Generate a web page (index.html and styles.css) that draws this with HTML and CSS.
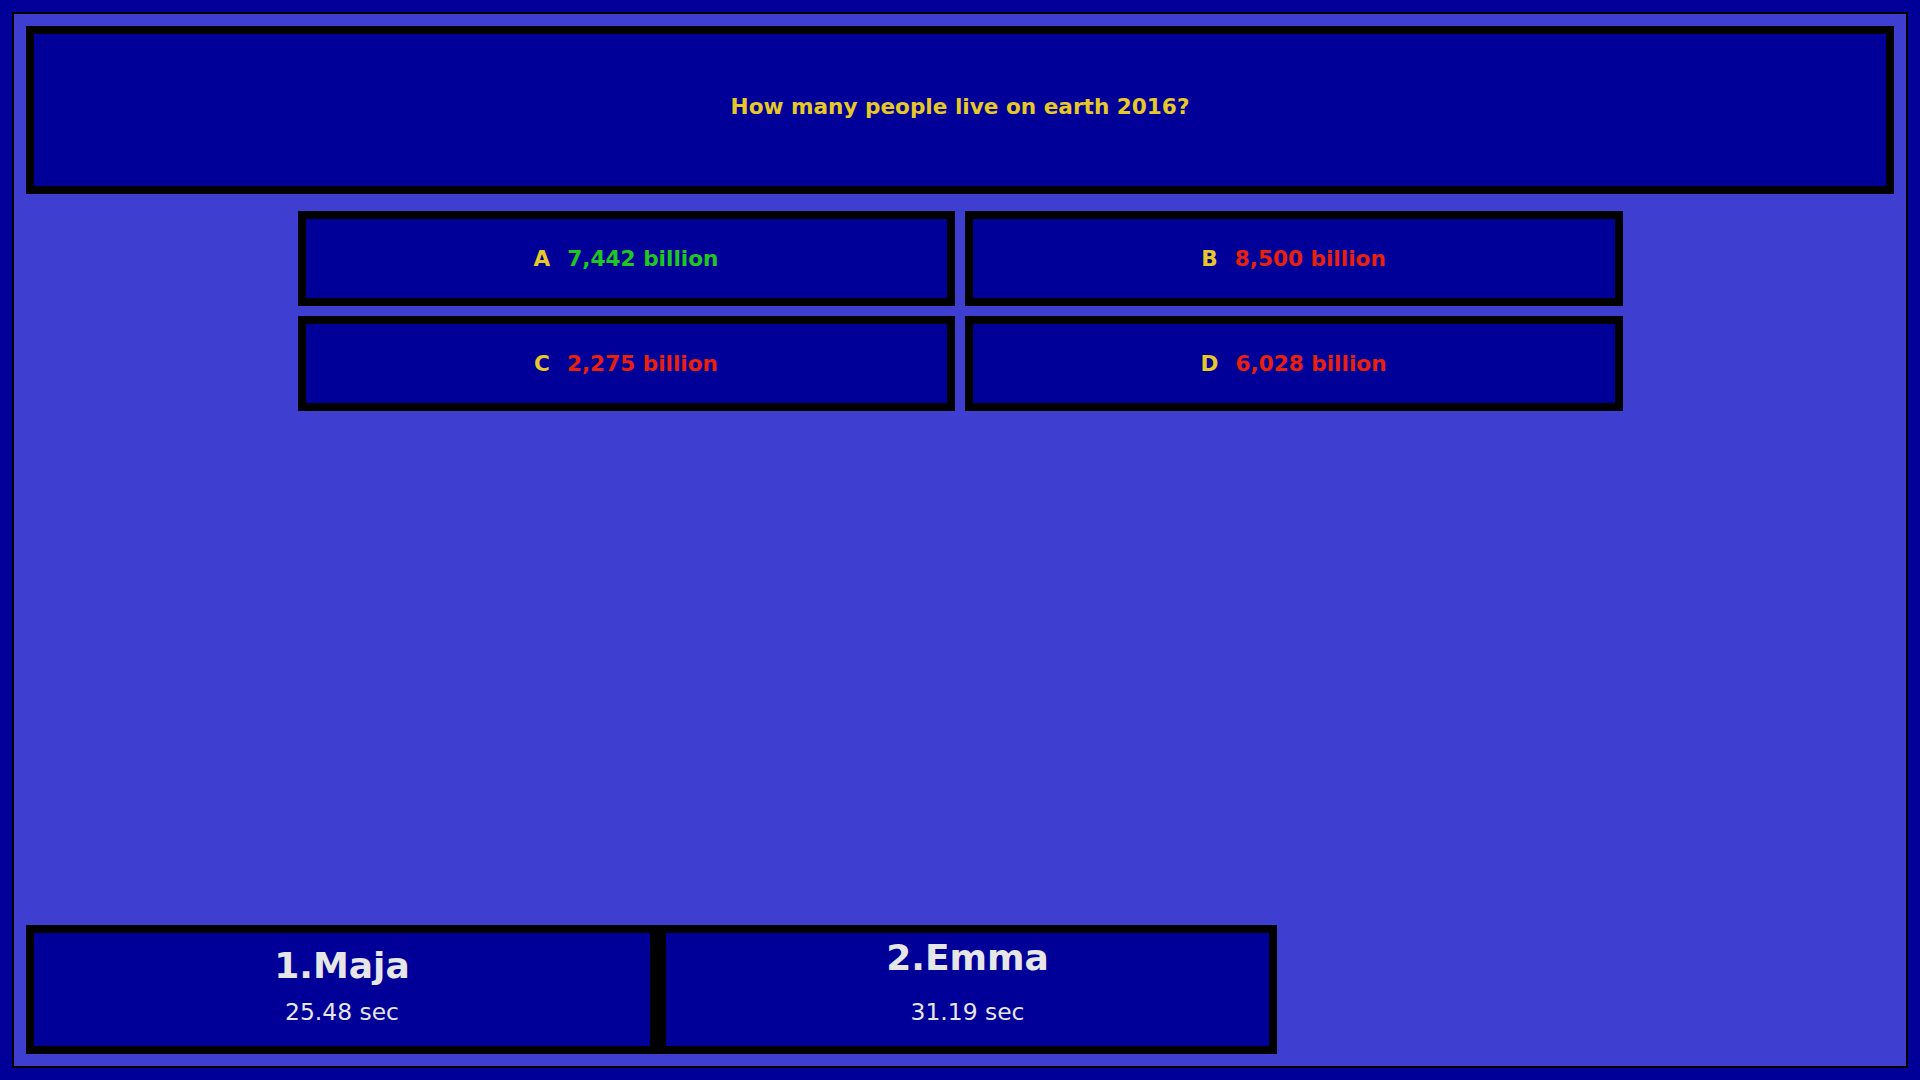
FILE: index.html
```html
<!DOCTYPE html>
<html lang="en">
<head>
<meta charset="utf-8">
<title>Quiz</title>
<link rel="stylesheet" href="styles.css">
</head>
<body>
<div class="stage">
  <div class="question">How many people live on earth 2016?</div>
  <div class="answers">
    <div class="answer"><span class="letter">A</span><span class="value correct">7,442 billion</span></div>
    <div class="answer"><span class="letter">B</span><span class="value wrong">8,500 billion</span></div>
    <div class="answer"><span class="letter">C</span><span class="value wrong">2,275 billion</span></div>
    <div class="answer"><span class="letter">D</span><span class="value wrong">6,028 billion</span></div>
  </div>
  <div class="players">
    <div class="player player-first">
      <div class="name">1.Maja</div>
      <div class="time">25.48 sec</div>
    </div>
    <div class="player player-second">
      <div class="name">2.Emma</div>
      <div class="time">31.19 sec</div>
    </div>
  </div>
</div>
</body>
</html>
```
FILE: styles.css
```css
html, body {
  margin: 0;
  padding: 0;
}
body {
  background: #000099;
  font-family: "DejaVu Sans", "Liberation Sans", sans-serif;
  width: 1920px;
  height: 1080px;
  overflow: hidden;
}
.stage {
  box-sizing: border-box;
  margin: 12px;
  width: 1896px;
  height: 1056px;
  border: 2px solid #000;
  background: #3e3ed0;
  padding: 12px;
  display: flex;
  flex-direction: column;
}
.question {
  box-sizing: border-box;
  height: 168px;
  border: 8px solid #000;
  background: #000099;
  color: #e6c828;
  font-weight: bold;
  font-size: 21.6px;
  display: flex;
  align-items: center;
  justify-content: center;
  padding-bottom: 8px;
}
.answers {
  margin: 17px auto 0;
  width: 1325px;
  display: grid;
  grid-template-columns: 657px 658px;
  grid-auto-rows: 95px;
  gap: 10px;
}
.answer {
  box-sizing: border-box;
  border: 8px solid #000;
  background: #000099;
  display: flex;
  align-items: center;
  justify-content: center;
  font-weight: bold;
  font-size: 21.6px;
}
.letter {
  color: #e6c828;
  margin-right: 17px;
}
.correct { color: #1ec81e; }
.wrong { color: #e8200c; }
.players {
  margin-top: auto;
  display: flex;
}
.player {
  box-sizing: border-box;
  height: 129px;
  border: 8px solid #000;
  background: #000099;
  color: #e6e6e6;
  text-align: center;
  display: flex;
  flex-direction: column;
  align-items: center;
}
.player-first {
  width: 632px;
  padding-top: 12px;
}
.player-second {
  width: 619px;
  padding-top: 4px;
}
.name {
  font-weight: bold;
  font-size: 36px;
  line-height: 42px;
}
.time {
  font-size: 23.4px;
  line-height: 27px;
}
.player-first .time { margin-top: 12px; }
.player-second .time { margin-top: 20px; }
```
